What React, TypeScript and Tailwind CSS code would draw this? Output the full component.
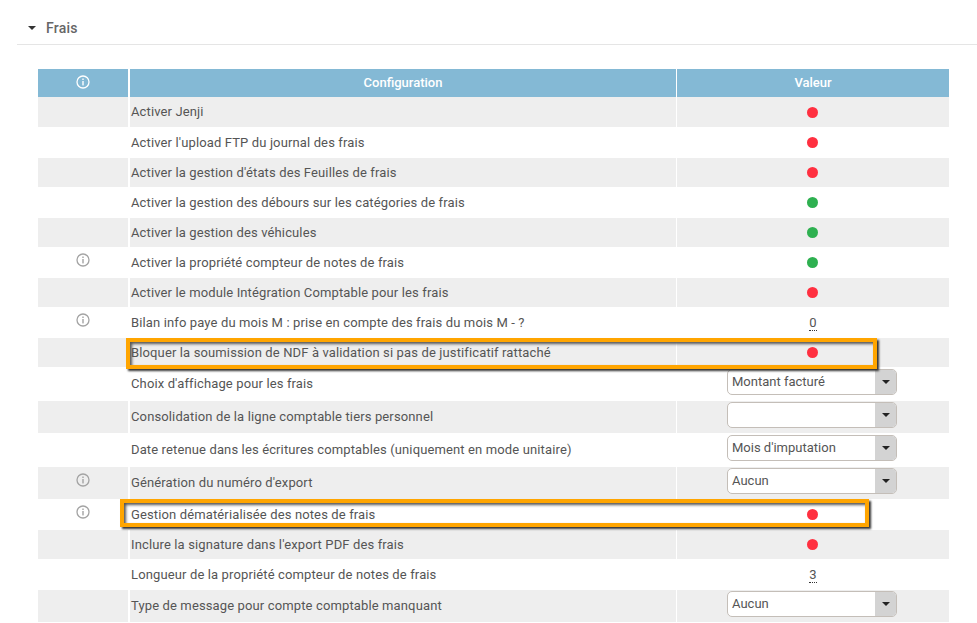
import React from "react";

type Row = {
  label: string;
  h: string;
  info?: boolean;
  dot?: "red" | "green";
  num?: string;
  select?: string;
};

const rows: Row[] = [
  { label: "Activer Jenji", h: "h-[30px]", dot: "red" },
  { label: "Activer l'upload FTP du journal des frais", h: "h-[31px]", dot: "red" },
  { label: "Activer la gestion d'états des Feuilles de frais", h: "h-[29px]", dot: "red" },
  { label: "Activer la gestion des débours sur les catégories de frais", h: "h-[31px]", dot: "green" },
  { label: "Activer la gestion des véhicules", h: "h-[29px]", dot: "green" },
  { label: "Activer la propriété compteur de notes de frais", h: "h-[31px]", info: true, dot: "green" },
  { label: "Activer le module Intégration Comptable pour les frais", h: "h-[29px]", dot: "red" },
  { label: "Bilan info paye du mois M : prise en compte des frais du mois M - ?", h: "h-[31px]", info: true, num: "0" },
  { label: "Bloquer la soumission de NDF à validation si pas de justificatif rattaché", h: "h-[29px]", dot: "red" },
  { label: "Choix d'affichage pour les frais", h: "h-[34px]", select: "Montant facturé" },
  { label: "Consolidation de la ligne comptable tiers personnel", h: "h-[32px]", select: "" },
  { label: "Date retenue dans les écritures comptables (uniquement en mode unitaire)", h: "h-[34px]", select: "Mois d'imputation" },
  { label: "Génération du numéro d'export", h: "h-[32px]", info: true, select: "Aucun" },
  { label: "Gestion dématérialisée des notes de frais", h: "h-[31px]", info: true, dot: "red" },
  { label: "Inclure la signature dans l'export PDF des frais", h: "h-[29px]", dot: "red" },
  { label: "Longueur de la propriété compteur de notes de frais", h: "h-[31px]", num: "3" },
  { label: "Type de message pour compte comptable manquant", h: "h-[32px]", select: "Aucun" },
];

const InfoIcon = ({ className }: { className: string }) => (
  <svg viewBox="0 0 14 14" className={className} fill="none">
    <circle cx="7" cy="7" r="6" stroke="currentColor" strokeWidth="1.3" />
    <rect x="6.3" y="6" width="1.4" height="4.4" fill="currentColor" />
    <rect x="6.3" y="3.5" width="1.4" height="1.5" fill="currentColor" />
  </svg>
);

const Select = ({ value }: { value: string }) => (
  <div className="mb-1 flex h-[26px] w-[170px] -translate-x-px overflow-hidden rounded-[5px] border border-[#c4beb8] bg-white">
    <div className="flex-1 pl-1 text-[13px] leading-[24px] text-[#555]">{value}</div>
    <div className="flex w-[21px] items-center justify-center bg-[#d3d3d3]">
      <div className="h-0 w-0 border-x-[4px] border-t-[4px] border-x-transparent border-t-[#222]" />
    </div>
  </div>
);

export default function App() {
  return (
    <div className="relative h-[623px] w-[977px] overflow-hidden bg-white font-['Roboto','Liberation_Sans',sans-serif] text-[13px] text-[#555]">
      <div className="ml-[17px] flex h-[45px] items-end border-b border-[#e5e5e5] pb-[5px]">
        <div className="mb-[9px] ml-[11px] h-0 w-0 border-x-[4px] border-t-[4px] border-x-transparent border-t-[#333]" />
        <span className="ml-[10px] text-[14px] font-medium tracking-[0.2px] text-[#666]">Frais</span>
      </div>

      <div className="relative ml-[38px] mt-[24px] w-[911px]">
        <div className="flex h-[28px] bg-[#84b9d5] font-medium text-white">
          <div className="flex w-[90px] justify-center pt-[6px]">
            <InfoIcon className="h-[14px] w-[14px]" />
          </div>
          <div className="w-[2px] bg-white" />
          <div className="flex w-[546px] items-center justify-center">Configuration</div>
          <div className="w-px bg-white" />
          <div className="flex flex-1 items-center justify-center">Valeur</div>
        </div>

        {rows.map((row, i) => (
          <div key={row.label} className={`flex ${row.h} ${i % 2 === 0 ? "bg-[#eeeeee]" : "bg-white"}`}>
            <div className="flex w-[90px] justify-center pt-[6px]">
              {row.info && <InfoIcon className="h-[14px] w-[14px] text-[#a3a3a3]" />}
            </div>
            <div className="w-[2px] bg-white" />
            <div className="flex w-[546px] items-center pl-px tracking-[0.13px]">{row.label}</div>
            <div className="w-px bg-white" />
            <div className="flex flex-1 items-center justify-center">
              {row.dot === "red" && <div className="h-[11px] w-[11px] -translate-x-px rounded-full bg-[#ff3040]" />}
              {row.dot === "green" && <div className="h-[11px] w-[11px] -translate-x-px rounded-full bg-[#2eb050]" />}
              {row.num && (
                <span className="border-b border-dotted border-[#333] leading-[15px]">{row.num}</span>
              )}
              {row.select !== undefined && <Select value={row.select} />}
            </div>
          </div>
        ))}

        {/* highlights drawn over the table */}
        <div className="absolute left-[88px] top-[269px] h-[31px] w-[751px] border-4 border-[#ffa500] shadow-[2px_2px_2px_#333,inset_2px_2px_3px_#555]" />
        <div className="absolute left-[82px] top-[430px] h-[28px] w-[749px] border-4 border-[#ffa500] shadow-[2px_2px_2px_#333,inset_2px_2px_3px_#555]" />
      </div>
    </div>
  );
}
